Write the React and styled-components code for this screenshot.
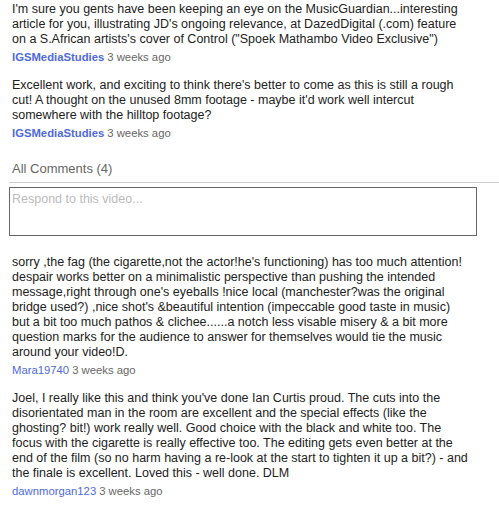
import React from "react";
import styled, { createGlobalStyle } from "styled-components";

const GlobalStyle = createGlobalStyle`
  body {
    margin: 0;
    background: #fff;
    font-family: "Liberation Sans", Arial, sans-serif;
  }
`;

const Page = styled.div`
  width: 499px;
  padding: 2px 0 0 9px;
  box-sizing: border-box;
`;

const Comment = styled.div`
  padding-left: 3px;
  margin-bottom: 13px;
`;

const Body = styled.div`
  font-size: 12.5px;
  line-height: 15px;
  color: #222;
`;

const Meta = styled.div`
  margin-top: 3px;
  font-size: 11.3px;
  line-height: 15px;
  color: #666;
`;

const Author = styled.span`
  color: #4f6ad8;
  font-weight: ${(p) => (p.$uploader ? "bold" : "normal")};
  margin-right: 3px;
`;

const Heading = styled.div`
  margin-top: 20px;
  padding: 0 0 6px 3px;
  font-size: 13px;
  line-height: 15px;
  color: #666;
  border-bottom: 1px solid #ccc;
`;

const ReplyBox = styled.div`
  margin-top: 4px;
  width: 468px;
  height: 49px;
  box-sizing: border-box;
  border: 1px solid #666;
  padding: 4px 2px;
  font-size: 12.5px;
  color: #bbb;
`;

const Thread = styled.div`
  margin-top: 19px;
`;

const top = [
  {
    author: "IGSMediaStudies",
    uploader: true,
    lines: [
      "I'm sure you gents have been keeping an eye on the MusicGuardian...interesting",
      "article for you, illustrating JD's ongoing relevance, at DazedDigital (.com) feature",
      'on a S.African artists\'s cover of Control ("Spoek Mathambo Video Exclusive")',
    ],
  },
  {
    author: "IGSMediaStudies",
    uploader: true,
    lines: [
      "Excellent work, and exciting to think there's better to come as this is still a rough",
      "cut! A thought on the unused 8mm footage - maybe it'd work well intercut",
      "somewhere with the hilltop footage?",
    ],
  },
];

const all = [
  {
    author: "Mara19740",
    lines: [
      "sorry ,the fag (the cigarette,not the actor!he's functioning) has too much attention!",
      "despair works better on a minimalistic perspective than pushing the intended",
      "message,right through one's eyeballs !nice local (manchester?was the original",
      "bridge used?) ,nice shot's &beautiful intention (impeccable good taste in music)",
      "but a bit too much pathos & clichee......a notch less visable misery & a bit more",
      "question marks for the audience to answer for themselves would tie the music",
      "around your video!D.",
    ],
  },
  {
    author: "dawnmorgan123",
    lines: [
      "Joel, I really like this and think you've done Ian Curtis proud. The cuts into the",
      "disorientated man in the room are excellent and the special effects (like the",
      "ghosting? bit!) work really well. Good choice with the black and white too. The",
      "focus with the cigarette is really effective too. The editing gets even better at the",
      "end of the film (so no harm having a re-look at the start to tighten it up a bit?) - and",
      "the finale is excellent. Loved this - well done. DLM",
    ],
  },
];

const CommentItem = ({ c }) => (
  <Comment>
    <Body>
      {c.lines.map((l, i) => (
        <React.Fragment key={i}>
          {l}
          {i < c.lines.length - 1 && <br />}
        </React.Fragment>
      ))}
    </Body>
    <Meta>
      <Author $uploader={c.uploader}>{c.author}</Author>3 weeks ago
    </Meta>
  </Comment>
);

export default function App() {
  return (
    <Page>
      <GlobalStyle />
      {top.map((c, i) => (
        <CommentItem key={i} c={c} />
      ))}
      <Heading>All Comments (4)</Heading>
      <ReplyBox>Respond to this video...</ReplyBox>
      <Thread>
        {all.map((c, i) => (
          <CommentItem key={i} c={c} />
        ))}
      </Thread>
    </Page>
  );
}
